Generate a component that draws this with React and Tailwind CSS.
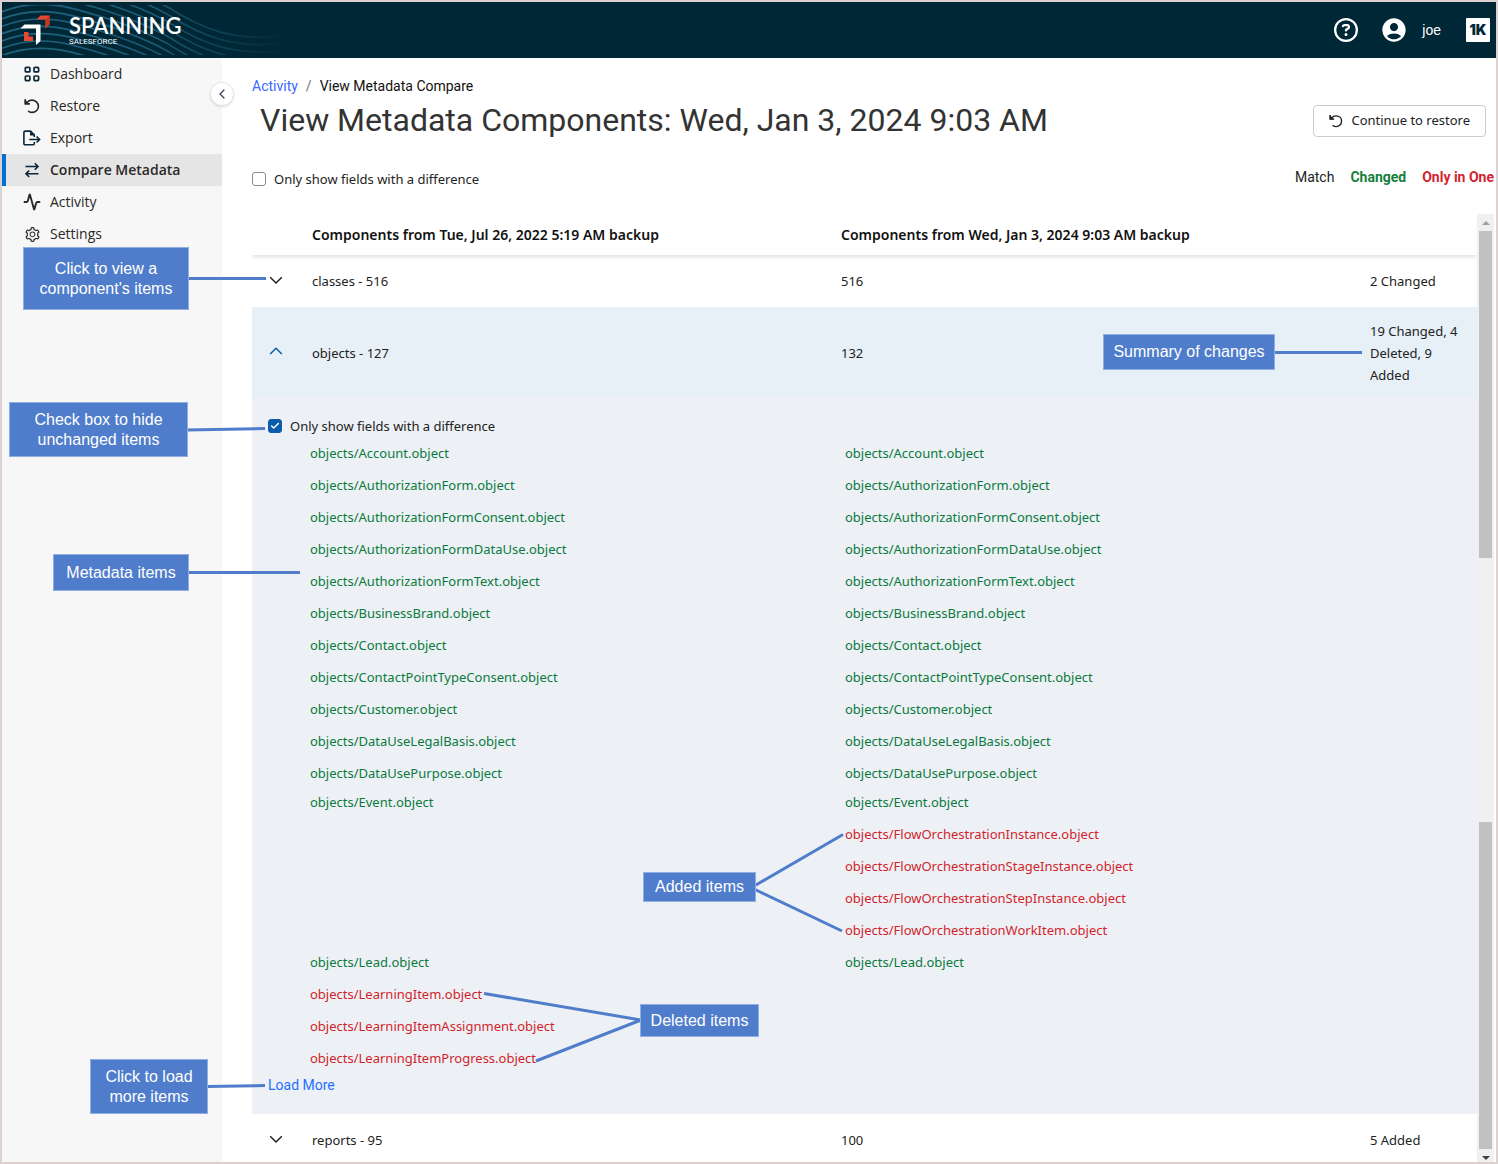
import { useState } from 'react';
import clsx from 'clsx';
import { ChevronLeft, Activity, Check } from 'lucide-react';
import { FaRegCircleQuestion } from 'react-icons/fa6';
import { MdAccountCircle } from 'react-icons/md';
import { AiOutlineSetting } from 'react-icons/ai';

const DashboardIcon = () => (
  <svg viewBox="0 0 16 16" className="h-4 w-4" fill="none" stroke="#0b2638" strokeWidth="1.7">
    <rect x="1.3" y="1.3" width="4.6" height="4.6" rx="1" />
    <rect x="10" y="1.3" width="4.6" height="4.6" rx="1" />
    <rect x="1.3" y="10" width="4.6" height="4.6" rx="1" />
    <rect x="10" y="10" width="4.6" height="4.6" rx="1" />
  </svg>
);

const RestoreIcon = ({ className = 'h-4 w-4' }) => (
  <svg viewBox="0 0 16 16" className={className} fill="none" stroke="currentColor" strokeWidth="1.6">
    <path d="M3 4.600C4.300 2.800 6.200 2 8.200 2.100c3.700.2 6.300 3 6.200 6.300-.1 3.400-2.900 6-6.200 6-1.400 0-2.600-.4-3.600-1.100" strokeLinecap="round" />
    <path d="M.7 1.200v5.200h5.200z" fill="currentColor" stroke="none" />
    <path d="M1.300 1.200v4.600h4.600" />
  </svg>
);

const ExportIcon = () => (
  <svg viewBox="0 0 18 16" className="h-4 w-[18px] shrink-0" fill="none" stroke="#0b2638" strokeWidth="1.6">
    <path d="M11.3 12v1.4c0 .9-.5 1.4-1.4 1.4H2.3c-.9 0-1.4-.5-1.4-1.4V2.5c0-.9.5-1.4 1.4-1.4h5.2l3.800 3.800V7" />
    <path d="M7 .9v4.500h4.600z" fill="#0b2638" stroke="none" />
    <path d="M6.300 9.500h10M13.600 6.500l3 3-3 3" />
  </svg>
);

const CompareIcon = () => (
  <svg viewBox="0 0 16 16" className="h-4 w-4" fill="none" stroke="#0b2638" strokeWidth="1.6">
    <path d="M1.500 4.500h12.500M10.800 1.300l3.200 3.200-3.200 3.200" />
    <path d="M14.500 11.800H2M5.200 8.600 2 11.800 5.200 15" />
  </svg>
);

const RowArrow = ({ open }) => (
  <svg viewBox="0 0 16 16" className="h-4 w-4" fill="none" stroke="currentColor" strokeWidth="1.5">
    <path d={open ? 'M2.200 9 8 3.200 13.800 9' : 'M2.200 4.200 8 10l5.800-5.800'} />
  </svg>
);

const navItems = [
  { label: 'Dashboard', icon: <DashboardIcon /> },
  { label: 'Restore', icon: <RestoreIcon /> },
  { label: 'Export', icon: <ExportIcon /> },
  { label: 'Compare Metadata', icon: <CompareIcon />, active: true },
  { label: 'Activity', icon: <Activity size={18} strokeWidth={2.5} className="shrink-0" /> },
  { label: 'Settings', icon: <AiOutlineSetting size={17} className="shrink-0" /> },
];

const firstItems = [
  'Account',
  'AuthorizationForm',
  'AuthorizationFormConsent',
  'AuthorizationFormDataUse',
  'AuthorizationFormText',
  'BusinessBrand',
  'Contact',
  'ContactPointTypeConsent',
  'Customer',
  'DataUseLegalBasis',
  'DataUsePurpose',
].map((name) => ({ left: name, right: name }));

const nextItems = [
  { left: 'Event', right: 'Event' },
  { right: 'FlowOrchestrationInstance' },
  { right: 'FlowOrchestrationStageInstance' },
  { right: 'FlowOrchestrationStepInstance' },
  { right: 'FlowOrchestrationWorkItem' },
  { left: 'Lead', right: 'Lead' },
  { left: 'LearningItem' },
  { left: 'LearningItemAssignment' },
  { left: 'LearningItemProgress' },
];

const waveOffsets = [-114, -92, -70, -48, -26, -4, 18, 40, 62, 84, 106, 128];

function Waves() {
  return (
    <svg viewBox="0 0 900 150" className="absolute left-0 top-[3px] h-[50px] w-[300px]" fill="none">
      <defs>
        <linearGradient id="fade" x1="0" x2="900" y1="0" y2="0" gradientUnits="userSpaceOnUse">
          <stop offset="0" stopColor="#22637f" />
          <stop offset="0.5" stopColor="#1c5873" />
          <stop offset="0.95" stopColor="#002736" />
        </linearGradient>
      </defs>
      <g stroke="url(#fade)" strokeWidth="5">
        {waveOffsets.map((y) => (
          <path
            key={y}
            d={`M0 ${y + 24}C60 ${y} 130 ${y - 6} 210 ${y + 14}C320 ${y + 42} 410 ${y + 72} 500 ${y + 122}C600 ${y + 186} 700 ${y + 226} 850 ${y + 206}`}
          />
        ))}
      </g>
    </svg>
  );
}

function Header() {
  return (
    <header className="relative flex h-14 shrink-0 items-center justify-between bg-[#002736] pl-[18px] pr-[6px] text-white">
      <Waves />
      <div className="relative flex items-center">
        <svg viewBox="0 0 30 30" className="h-[30px] w-[30px]">
          <path d="M16.500 4.500 20.500.500h9v9l-4 4v-9z" fill="#e8472f" />
          <path d="M25.500 4.500l4-4v9l-4 4z" fill="#c9371f" />
          <path d="M.500 13.500l4-4h16v16.500l-4.500 4V13.500z" fill="#fff" />
          <path d="M4 17h4.500v4.500H13V26H4z" fill="#e8472f" />
        </svg>
        <div className="ml-[19px] font-['Lato',sans-serif]">
          <div className="text-[22px] font-semibold leading-6">SPANNING</div>
          <div className="font-['Roboto',sans-serif] text-[8px] leading-2">SALESFORCE</div>
        </div>
      </div>
      <div className="relative flex items-center">
        <button aria-label="Help"><FaRegCircleQuestion size={24} /></button>
        <button className="ml-[22px] flex items-center gap-[14px] font-['Liberation_Sans',Arial,sans-serif] text-sm">
          <MdAccountCircle size={28} />
          joe
        </button>
        <button aria-label="Apps" className="ml-[25px] h-6 w-6 rounded-[1px] bg-white font-['Inter',sans-serif] text-sm font-black leading-6 text-[#002736]">
          1K
        </button>
      </div>
    </header>
  );
}

function Sidebar() {
  return (
    <aside className="relative w-[220px] shrink-0 bg-[#f7f7f7]">
      <nav>
        {navItems.map(({ label, icon, active }) => (
          <a
            key={label}
            href="#"
            className={clsx(
              "flex h-8 items-center gap-[10px] border-l-4 pl-[18px] font-['Open_Sans',sans-serif] text-sm text-[#2b2826]",
              active ? 'border-[#0070d2] bg-[#e5e5e5] font-semibold' : 'border-transparent'
            )}
          >
            <span className="flex w-4 justify-center">{icon}</span>
            {label}
          </a>
        ))}
      </nav>
      <button
        aria-label="Collapse menu"
        className="absolute -right-3 top-6 flex h-6 w-6 items-center justify-center rounded-full border border-gray-200 bg-white text-gray-700 shadow-sm"
      >
        <ChevronLeft size={16} strokeWidth={1.800} />
      </button>
    </aside>
  );
}

function Checkbox({ label, defaultChecked = false }) {
  const [checked, setChecked] = useState(defaultChecked);
  return (
    <label className="inline-flex items-center gap-2 leading-[22px]">
      <span className="relative flex">
        <input
          type="checkbox"
          checked={checked}
          onChange={(e) => setChecked(e.target.checked)}
          className="h-[14px] w-[14px] appearance-none rounded-[3px] border border-[#8c8c8c] bg-white checked:border-[#0b5cab] checked:bg-[#0b5cab]"
        />
        {checked && <Check size={10} strokeWidth={3.500} className="pointer-events-none absolute left-[2px] top-[2px] text-white" />}
      </span>
      {label}
    </label>
  );
}

function ItemRow({ left, right }) {
  const color = left && right ? 'text-[#0b7a3e]' : 'text-[#d21f2b]';
  return (
    <li className={clsx('grid h-[22px] grid-cols-2 leading-[22px]', color)}>
      <span>{left && `objects/${left}.object`}</span>
      <span>{right && `objects/${right}.object`}</span>
    </li>
  );
}

function ComponentRow({ name, total, summary, open }) {
  return (
    <tr className={open ? 'bg-[#e7eff7]' : 'bg-white'}>
      <td className="pl-4">
        <button aria-label={`Toggle ${name}`} className={clsx('flex', open ? 'text-[#0b5cab]' : 'text-[#222]')}>
          <RowArrow open={open} />
        </button>
      </td>
      <td className="px-3 py-[15px]">{name}</td>
      <td className="px-3">{total}</td>
      <td className={clsx('px-3', open && 'pb-3 pt-[13px]')}>{summary}</td>
    </tr>
  );
}

function CompareTable() {
  return (
    <table className="w-full table-fixed border-collapse text-left leading-[22px]">
      <colgroup>
        <col className="w-12" />
        <col />
        <col />
        <col className="w-[119px]" />
      </colgroup>
      <thead className="relative text-sm leading-[22px] text-[#111] shadow-[0_2px_4px_rgba(0,0,0,0.12)]">
        <tr className="h-[41px]">
          <th aria-label="Expand" />
          <th className="px-3 font-semibold">Components from Tue, Jul 26, 2022 5:19 AM backup</th>
          <th className="px-3 font-semibold">Components from Wed, Jan 3, 2024 9:03 AM backup</th>
          <th aria-label="Summary" />
        </tr>
      </thead>
      <tbody>
        <ComponentRow name="classes - 516" total="516" summary="2 Changed" />
        <ComponentRow name="objects - 127" total="132" summary="19 Changed, 4 Deleted, 9 Added" open />
        <tr className="bg-[#edf1f6]">
          <td colSpan={4} className="pb-[18px] pt-[17px]">
            <div className="flex pl-4">
              <Checkbox label="Only show fields with a difference" defaultChecked />
            </div>
            <div className="mt-[5px] space-y-[7px] pl-[58px] pr-[97px]">
              <ul className="space-y-[10px]">
                {firstItems.map((item) => <ItemRow key={item.left} {...item} />)}
              </ul>
              <ul className="space-y-[10px]">
                {nextItems.map((item) => <ItemRow key={item.left || item.right} {...item} />)}
              </ul>
            </div>
            <button className="ml-4 mt-[5px] block font-['Roboto',sans-serif] text-sm leading-[22px] text-[#1f6fff]">Load More</button>
          </td>
        </tr>
        <ComponentRow name="reports - 95" total="100" summary="5 Added" />
      </tbody>
    </table>
  );
}

function Scrollbar() {
  return (
    <div className="flex w-[17px] shrink-0 flex-col items-center bg-[#f0f0f0]" aria-hidden="true">
      <div className="flex h-[17px] items-center">
        <svg viewBox="0 0 8 4" className="h-1 w-2"><path d="M0 4 4 0l4 4z" fill="#a0a0a0" /></svg>
      </div>
      <div className="w-[13px] flex-[327] bg-[#c1c1c1]" />
      <div className="flex-[264]" />
      <div className="w-[13px] flex-[327] bg-[#c1c1c1]" />
      <div className="flex h-[13px] items-center pt-1">
        <svg viewBox="0 0 8 4" className="h-1 w-2"><path d="M0 0h8L4 4z" fill="#404040" /></svg>
      </div>
    </div>
  );
}

function Callout({ className, children }) {
  return (
    <div className={clsx("absolute flex items-center justify-center border border-[#8fafe3] bg-[#4f7dcb] text-center font-['Liberation_Sans',Arial,sans-serif] text-base leading-5 text-white", className)}>
      {children}
    </div>
  );
}

// Help notes pinned over the screen
function Callouts() {
  return (
    <div className="pointer-events-none absolute inset-0">
      <svg className="absolute inset-0 h-full w-full" stroke="#4f7dcb" strokeWidth="3" fill="none">
        <path d="M188 278.500H266" />
        <path d="M187 430 265 428.500" />
        <path d="M1274 352.500H1362" />
        <path d="M188 572.500H300" />
        <path d="M843 834.500 755 885.500M755 889.500 842 931" />
        <path d="M484 993.500 641 1020 536 1061" />
        <path d="M207 1086.500 265 1085.500" />
      </svg>
      <Callout className="left-[23px] top-[247px] h-[63px] w-[166px]">Click to view a<br />component's items</Callout>
      <Callout className="left-[9px] top-[402px] h-[55px] w-[179px]">Check box to hide<br />unchanged items</Callout>
      <Callout className="left-[1103px] top-[334px] h-9 w-[172px]">Summary of changes</Callout>
      <Callout className="left-[53px] top-[554px] h-[37px] w-[136px]">Metadata items</Callout>
      <Callout className="left-[643px] top-[872px] h-[30px] w-[113px]">Added items</Callout>
      <Callout className="left-[640px] top-[1004px] h-[33px] w-[119px]">Deleted items</Callout>
      <Callout className="left-[90px] top-[1059px] h-[55px] w-[118px]">Click to load<br />more items</Callout>
    </div>
  );
}

export default function App() {
  return (
    <div className="relative h-screen overflow-hidden bg-white font-['Noto_Sans',sans-serif] text-[13px] text-[#222]">
      <div className="flex h-full flex-col border-2 border-[#dcd0d0]">
        <Header />
        <div className="flex min-h-0 flex-1">
          <Sidebar />
          <main className="flex min-w-0 flex-1 flex-col pl-[30px] pr-[2px] pt-[17px]">
            <nav className="flex gap-2 font-['Roboto',sans-serif] text-sm leading-[22px]">
              <a href="#" className="text-[#3b66ff]">Activity</a>
              <span className="text-gray-500">/</span>
              <span className="text-[#111]">View Metadata Compare</span>
            </nav>
            <div className="flex items-start justify-between pl-2 pr-2">
              <h1 className="font-['Roboto',sans-serif] text-[32px] leading-[46px] text-[#333]">
                View Metadata Components: Wed, Jan 3, 2024 9:03 AM
              </h1>
              <button className="mt-2 flex h-8 items-center gap-2 rounded-[4px] border border-[#ccc] px-[15px]">
                <RestoreIcon className="h-[14px] w-[14px]" />
                Continue to restore
              </button>
            </div>
            <div className="mt-[25px] flex items-start justify-between">
              <Checkbox label="Only show fields with a difference" />
              <div className="flex gap-4 font-['Roboto',sans-serif] text-sm leading-[18px]">
                <span>Match</span>
                <span className="font-bold text-[#14803c]">Changed</span>
                <span className="font-bold text-[#d3232f]">Only in One</span>
              </div>
            </div>
            <div className="mt-6 flex min-h-0 flex-1">
              <div className="min-w-0 flex-1 overflow-hidden">
                <CompareTable />
              </div>
              <Scrollbar />
            </div>
          </main>
        </div>
      </div>
      <Callouts />
    </div>
  );
}
